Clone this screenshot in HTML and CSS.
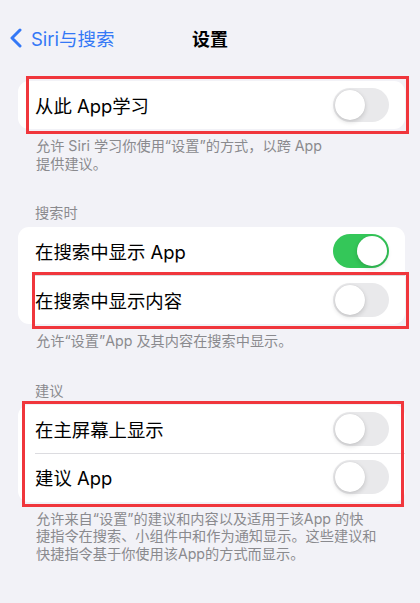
FILE: index.html
```html
<!DOCTYPE html>
<html lang="zh-CN">
<head>
    <meta charset="UTF-8">
    <meta name="viewport" content="width=device-width, initial-scale=1.0">
    <title>设置</title>
    <link rel="stylesheet" href="styles.css">
</head>
<body>
    <div class="nav">
        <a class="back" href="#">
            <svg class="chevron" width="14" height="20" viewBox="0 0 14 20">
                <path d="M11 2 L3 10 L11 18" fill="none" stroke="#3478f6" stroke-width="3" stroke-linecap="round" stroke-linejoin="round"/>
            </svg>
            <span>Siri与搜索</span>
        </a>
        <h1 class="title">设置</h1>
        <div></div>
    </div>

    <div class="card marked">
        <div class="row">
            <span class="label">从此 App学习</span>
            <span class="switch"></span>
        </div>
        <div class="mark mark-learn"></div>
    </div>
    <p class="footer">允许 Siri 学习你使用“设置”的方式，以跨 App<br>提供建议。</p>

    <h2 class="section">搜索时</h2>
    <div class="card">
        <div class="row">
            <span class="label">在搜索中显示 App</span>
            <span class="switch on"></span>
        </div>
        <div class="row marked">
            <span class="label">在搜索中显示内容</span>
            <span class="switch"></span>
            <div class="mark mark-content"></div>
        </div>
    </div>
    <p class="footer">允许“设置”App 及其内容在搜索中显示。</p>

    <h2 class="section">建议</h2>
    <div class="card marked">
        <div class="row">
            <span class="label">在主屏幕上显示</span>
            <span class="switch"></span>
        </div>
        <div class="row">
            <span class="label">建议 App</span>
            <span class="switch"></span>
        </div>
        <div class="mark mark-suggest"></div>
    </div>
    <p class="footer">允许来自“设置”的建议和内容以及适用于该App 的快<br>捷指令在搜索、小组件中和作为通知显示。这些建议和<br>快捷指令基于你使用该App的方式而显示。</p>
</body>
</html>
```

FILE: styles.css
```css
* {
    margin: 0;
    padding: 0;
    box-sizing: border-box;
}

body {
    font-family: 'Inter', 'Noto Sans CJK SC', sans-serif;
    background: #f2f2f7;
    color: #000000;
    width: 420px;
    min-height: 603px;
}

.nav {
    height: 76px;
    display: grid;
    grid-template-columns: 1fr auto 1fr;
    align-items: center;
}

.back {
    display: flex;
    align-items: center;
    gap: 8px;
    padding-left: 9px;
    color: #3478f6;
    text-decoration: none;
    font-size: 18.5px;
}

.title {
    font-size: 18px;
    font-weight: 600;
}

.card {
    background: #ffffff;
    border-radius: 11px;
    margin: 5px 15px 0 18px;
}

.marked {
    position: relative;
}

.row {
    height: 48px;
    display: flex;
    align-items: center;
    justify-content: space-between;
    padding: 0 16px 0 17px;
}

.row + .row {
    height: 49px;
    background: linear-gradient(#dcdce0, #dcdce0) no-repeat 17px 0 / 100% 1px;
}

.section + .card {
    margin-top: 6px;
}

.label {
    font-size: 18.4px;
}

.switch {
    width: 56px;
    height: 34px;
    border-radius: 17px;
    background: #e9e9eb;
    position: relative;
}

.switch::after {
    content: "";
    position: absolute;
    top: 2px;
    left: 2px;
    width: 30px;
    height: 30px;
    border-radius: 50%;
    background: #ffffff;
    box-shadow: 0 2px 5px rgba(0, 0, 0, 0.16), 0 0 1px rgba(0, 0, 0, 0.12);
}

.switch.on {
    background: #34c759;
}

.switch.on::after {
    left: 24px;
}

.footer {
    padding: 8px 20px 0 36px;
    font-size: 14.2px;
    line-height: 17.5px;
    color: #8a8a8e;
    white-space: nowrap;
}

.section {
    margin-top: 32px;
    padding-left: 35px;
    font-size: 14.2px;
    line-height: 17px;
    font-weight: normal;
    color: #8a8a8e;
}

/* red highlight frames drawn over the rows */
.mark {
    position: absolute;
    border: 3px solid #f0363c;
    pointer-events: none;
}

.mark-learn {
    left: 8px;
    top: -5px;
    right: -4px;
    bottom: -5px;
}

.mark-content {
    left: 14px;
    top: -3px;
    right: -4px;
    bottom: -5px;
}

.mark-suggest {
    left: 4px;
    top: -4px;
    right: 1px;
    bottom: -5px;
}
```
